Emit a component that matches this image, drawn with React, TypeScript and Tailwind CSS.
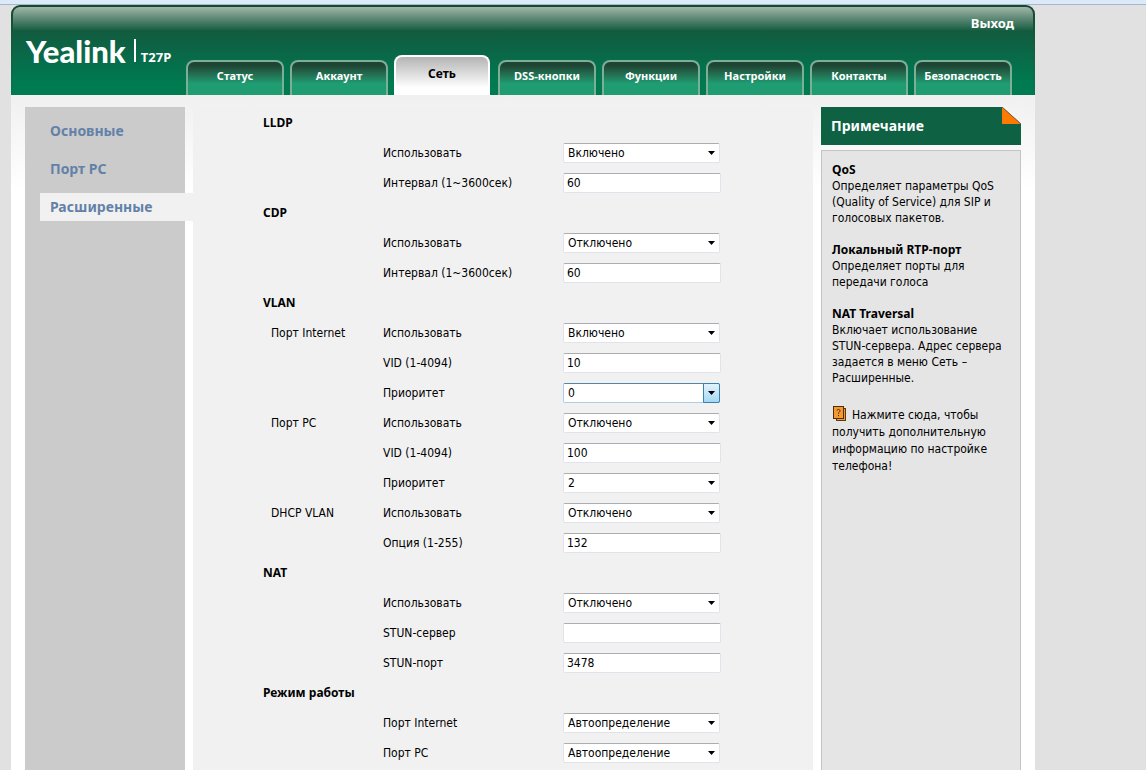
import { ReactNode, useState } from "react";

const tabs = [
  "Статус",
  "Аккаунт",
  "Сеть",
  "DSS-кнопки",
  "Функции",
  "Настройки",
  "Контакты",
  "Безопасность",
];

const sideLinks = ["Основные", "Порт PC", "Расширенные"];

type Field = {
  id: string;
  group?: string;
  label: string;
  kind: "select" | "text";
  value: string;
  options?: string[];
  hot?: boolean;
};

type Section = { title: string; fields: Field[] };

const onOff = ["Включено", "Отключено"];
const priorities = ["0", "1", "2", "3", "4", "5", "6", "7"];
const linkModes = ["Автоопределение"];

const sections: Section[] = [
  {
    title: "LLDP",
    fields: [
      { id: "lldp-on", label: "Использовать", kind: "select", value: "Включено", options: onOff },
      { id: "lldp-int", label: "Интервал (1~3600сек)", kind: "text", value: "60" },
    ],
  },
  {
    title: "CDP",
    fields: [
      { id: "cdp-on", label: "Использовать", kind: "select", value: "Отключено", options: onOff },
      { id: "cdp-int", label: "Интервал (1~3600сек)", kind: "text", value: "60" },
    ],
  },
  {
    title: "VLAN",
    fields: [
      { id: "wan-on", group: "Порт Internet", label: "Использовать", kind: "select", value: "Включено", options: onOff },
      { id: "wan-vid", label: "VID (1-4094)", kind: "text", value: "10" },
      { id: "wan-prio", label: "Приоритет", kind: "select", value: "0", options: priorities, hot: true },
      { id: "pc-on", group: "Порт PC", label: "Использовать", kind: "select", value: "Отключено", options: onOff },
      { id: "pc-vid", label: "VID (1-4094)", kind: "text", value: "100" },
      { id: "pc-prio", label: "Приоритет", kind: "select", value: "2", options: priorities },
      { id: "dhcp-on", group: "DHCP VLAN", label: "Использовать", kind: "select", value: "Отключено", options: onOff },
      { id: "dhcp-opt", label: "Опция (1-255)", kind: "text", value: "132" },
    ],
  },
  {
    title: "NAT",
    fields: [
      { id: "nat-on", label: "Использовать", kind: "select", value: "Отключено", options: onOff },
      { id: "stun-host", label: "STUN-сервер", kind: "text", value: "" },
      { id: "stun-port", label: "STUN-порт", kind: "text", value: "3478" },
    ],
  },
  {
    title: "Режим работы",
    fields: [
      { id: "mode-wan", label: "Порт Internet", kind: "select", value: "Автоопределение", options: linkModes },
      { id: "mode-pc", label: "Порт PC", kind: "select", value: "Автоопределение", options: linkModes },
    ],
  },
];

function SelectBox({ field }: { field: Field }) {
  const border = field.hot
    ? "border-[#a9cfe6] border-t-[#5586a3]"
    : "border-[#e2e3ea] border-t-[#abadb3]";
  return (
    <div className="relative w-[157px]">
      <select
        id={field.id}
        defaultValue={field.value}
        className={`block h-5 w-full appearance-none rounded-[2px] border bg-white pl-1 pr-5 text-xs leading-4 text-black outline-none ${border}`}
      >
        {field.options?.map((o) => (
          <option key={o}>{o}</option>
        ))}
      </select>
      <span
        className={
          field.hot
            ? "pointer-events-none absolute inset-y-0 right-0 flex w-[17px] items-center justify-center rounded-r-[2px] border border-[#3c7fb1] bg-linear-to-b from-[#e4f3fc] to-[#a5d8f2]"
            : "pointer-events-none absolute inset-y-0 right-0 flex w-[17px] items-center justify-center"
        }
      >
        <svg width="7" height="4" viewBox="0 0 7 4" aria-hidden="true">
          <path d="M0 0H7L3.5 4Z" fill="#000" />
        </svg>
      </span>
    </div>
  );
}

function FieldRow({ field }: { field: Field }) {
  return (
    <div className="flex h-[30px] items-center">
      <span className="w-[120px] shrink-0 pl-2">{field.group}</span>
      <label htmlFor={field.id} className="w-[180px] shrink-0">
        {field.label}
      </label>
      {field.kind === "select" ? (
        <SelectBox field={field} />
      ) : (
        <input
          id={field.id}
          type="text"
          defaultValue={field.value}
          className="block h-5 w-[158px] rounded-[2px] border border-[#e2e3ea] border-t-[#abadb3] bg-white px-[3px] text-xs leading-4 text-black outline-none"
        />
      )}
    </div>
  );
}

function Note({ title, children }: { title: string; children: ReactNode }) {
  return (
    <section className="mb-4 leading-4">
      <h3 className="font-['Noto_Sans',sans-serif] font-bold">{title}</h3>
      <p>{children}</p>
    </section>
  );
}

function HelpIcon() {
  return (
    <svg
      className="mr-[6px] inline-block align-[-2px]"
      width="14"
      height="15"
      viewBox="0 0 14 15"
      aria-hidden="true"
    >
      <rect x="4.5" y="2.5" width="9" height="12" fill="#f79a2e" stroke="#5a3a10" />
      <rect x="1.5" y="0.5" width="10" height="12" fill="#f79a2e" stroke="#4a3010" />
      <path d="M5 4.6C5 3 8 3 8 4.8C8 6 6.5 6 6.5 7.8M6.5 9V10.2" fill="none" stroke="#4a3010" />
    </svg>
  );
}

export default function App() {
  const [active, setActive] = useState("Сеть");

  return (
    <div className="flex min-h-screen flex-col bg-[#e1e1e1] font-['DejaVu_Sans_Condensed','DejaVu_Sans',sans-serif] text-xs text-black">
      <div className="h-[5px] shrink-0 border-b border-[#a6b8cf] bg-[#dbe9f8]" />
      <div className="ml-[11px] flex w-full max-w-[1024px] grow flex-col">
        <header className="rounded-t-[9px] bg-linear-to-b from-[#16482f] to-[#007a50] px-[2px] pt-[2px]">
          <div className="flex h-[88px] flex-col rounded-t-[7px] bg-[linear-gradient(180deg,#a0b7aa_0px,#6c9280_9px,#135b3f_24px,#0b6546_42px,#007a50_75px,#007a50_88px)]">
            <div className="flex grow items-stretch">
              <div className="flex w-[173px] shrink-0 items-end pb-[33px] pl-[13px] text-white">
                <span className="font-['Lato','Open_Sans',sans-serif] text-[31px] leading-[22px] font-black">
                  Yealink
                </span>
                <span className="ml-2 h-[23px] w-[2px] bg-white" />
                <span className="ml-[5px] font-['Noto_Sans',sans-serif] text-[13px] leading-[10px] font-bold">
                  T27P
                </span>
              </div>
              <div className="flex grow flex-col justify-between">
                <a
                  href="#logout"
                  className="mt-2 mr-[19px] self-end font-['Noto_Sans',sans-serif] text-[13px] leading-4 font-bold text-white"
                >
                  Выход
                </a>
                <nav className="flex items-end gap-[6px]">
                  {tabs.map((t) =>
                    t === active ? (
                      <button
                        key={t}
                        type="button"
                        className="mr-[2px] h-10 w-24 rounded-t-lg border-2 border-b-0 border-white bg-linear-to-b from-[#b4b4b4] to-white to-80% pb-1 font-['Noto_Sans',sans-serif] text-xs font-bold text-black"
                      >
                        {t}
                      </button>
                    ) : (
                      <button
                        key={t}
                        type="button"
                        onClick={() => setActive(t)}
                        className="h-[35px] w-[98px] rounded-t-lg border-2 border-b-0 border-[#7cae98] bg-linear-to-b from-[#1e4534] from-10% to-[#1f9c72] to-65% pb-1 font-['Noto_Sans',sans-serif] text-[11px] font-bold whitespace-nowrap text-white"
                      >
                        {t}
                      </button>
                    ),
                  )}
                </nav>
              </div>
            </div>
          </div>
        </header>

        <div className="flex grow items-stretch gap-2 bg-[linear-gradient(180deg,#f0f0f0_0px,#ffffff_95px)] px-[14px] pt-3">
          <nav className="flex w-40 shrink-0 flex-col gap-[10px] bg-[#cbcbcb] pt-[10px] pl-[15px] font-['Noto_Sans',sans-serif] text-sm leading-7 font-bold text-[#6381a8]">
            {sideLinks.map((l) => (
              <a
                key={l}
                href="#page"
                className={l === "Расширенные" ? "-mr-2 bg-[#f1f1f1] pl-[10px]" : "pl-[10px]"}
              >
                {l}
              </a>
            ))}
          </nav>

          <main className="min-w-0 grow bg-[#f1f1f1] pt-px pl-[70px]">
            <form>
              {sections.map((s) => (
                <section key={s.title}>
                  <h2 className="font-['Noto_Sans',sans-serif] leading-[30px] font-bold">{s.title}</h2>
                  {s.fields.map((f) => (
                    <FieldRow key={f.id} field={f} />
                  ))}
                </section>
              ))}
            </form>
          </main>

          <aside className="flex w-[200px] shrink-0 flex-col gap-[5px]">
            <div className="flex items-start justify-between bg-[#0f6143] pl-[10px]">
              <h2 className="font-['Noto_Sans',sans-serif] text-sm leading-[38px] font-bold text-white">
                Примечание
              </h2>
              <svg width="19" height="17" viewBox="0 0 19 17" aria-hidden="true">
                <path d="M0 0H19V17Z" fill="#f3f3f3" />
                <path d="M0 0V17H19Z" fill="#ff7a00" />
                <path d="M0 0L19 17" stroke="#7a5a40" />
              </svg>
            </div>
            <div className="grow border border-b-0 border-[#c4c4c4] bg-[#e5e5e5] px-[10px] pt-[11px]">
              <Note title="QoS">
                Определяет параметры QoS (Quality of Service) для SIP и голосовых пакетов.
              </Note>
              <Note title="Локальный RTP-порт">Определяет порты для передачи голоса</Note>
              <Note title="NAT Traversal">
                Включает использование STUN-сервера. Адрес сервера задается в меню Сеть – Расширенные.
              </Note>
              <a href="#help" className="mt-5 block leading-[17px]">
                <HelpIcon />
                Нажмите сюда, чтобы получить дополнительную информацию по настройке телефона!
              </a>
            </div>
          </aside>
        </div>
      </div>
    </div>
  );
}
